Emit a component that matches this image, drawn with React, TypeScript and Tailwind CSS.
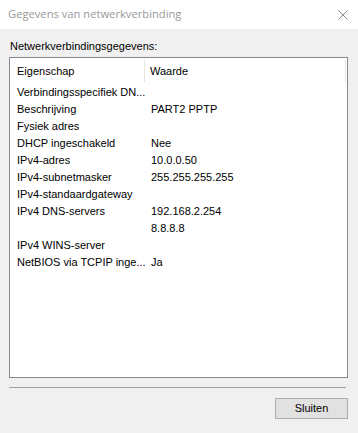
import React from "react";

const rows: [string, string][] = [
  ["Verbindingsspecifiek DN...", ""],
  ["Beschrijving", "PART2 PPTP"],
  ["Fysiek adres", ""],
  ["DHCP ingeschakeld", "Nee"],
  ["IPv4-adres", "10.0.0.50"],
  ["IPv4-subnetmasker", "255.255.255.255"],
  ["IPv4-standaardgateway", ""],
  ["IPv4 DNS-servers", "192.168.2.254"],
  ["", "8.8.8.8"],
  ["IPv4 WINS-server", ""],
  ["NetBIOS via TCPIP inge...", "Ja"],
];

export default function App() {
  return (
    <div className="w-[358px] h-[433px] bg-[#f0f0f0] flex flex-col overflow-hidden" style={{ fontFamily: '"Liberation Sans", Arial, sans-serif' }}>
      <div className="h-[29px] bg-white flex items-center justify-between pl-[8px] pr-[10px] shrink-0">
        <span className="text-[11.2px] text-[#999999]" style={{ fontFamily: '"Open Sans", "Noto Sans", sans-serif' }}>Gegevens van netwerkverbinding</span>
        <svg width="10" height="10" viewBox="0 0 10 10">
          <path d="M0.5 0.5 L9.5 9.5 M9.5 0.5 L0.5 9.5" stroke="#8a8a8a" strokeWidth="1" fill="none" />
        </svg>
      </div>
      <div className="flex flex-col pl-[9px] pr-[10px] pt-[11px]">
        <div className="text-[11px] leading-[13px] text-black pl-[1px]">Netwerkverbindingsgegevens:</div>
        <div className="mt-[4px] h-[321px] border border-[#828790] bg-white flex flex-col">
          <div className="h-[26px] flex items-stretch text-[11px] text-black">
            <div className="w-[135px] flex items-center pl-[7px] border-r border-[#e5e5e5] my-[2px]">Eigenschap</div>
            <div className="flex-1 flex items-center pl-[5px] border-r border-[#e5e5e5] my-[2px] mr-[1px]">Waarde</div>
          </div>
          {rows.map(([k, v], i) => (
            <div key={i} className="h-[17px] flex items-center text-[11px] text-black">
              <div className="w-[136px] pl-[7px] whitespace-nowrap">{k}</div>
              <div className="pl-[5px] whitespace-nowrap">{v}</div>
            </div>
          ))}
        </div>
        <div className="mt-[9px] h-[1px] bg-[#a0a0a0] mr-[2px]" />
        <div className="flex justify-end mt-[10px]">
          <button className="w-[73px] h-[21px] border border-[#adadad] bg-[#e1e1e1] text-[11px] text-black flex items-center justify-center">Sluiten</button>
        </div>
      </div>
    </div>
  );
}
